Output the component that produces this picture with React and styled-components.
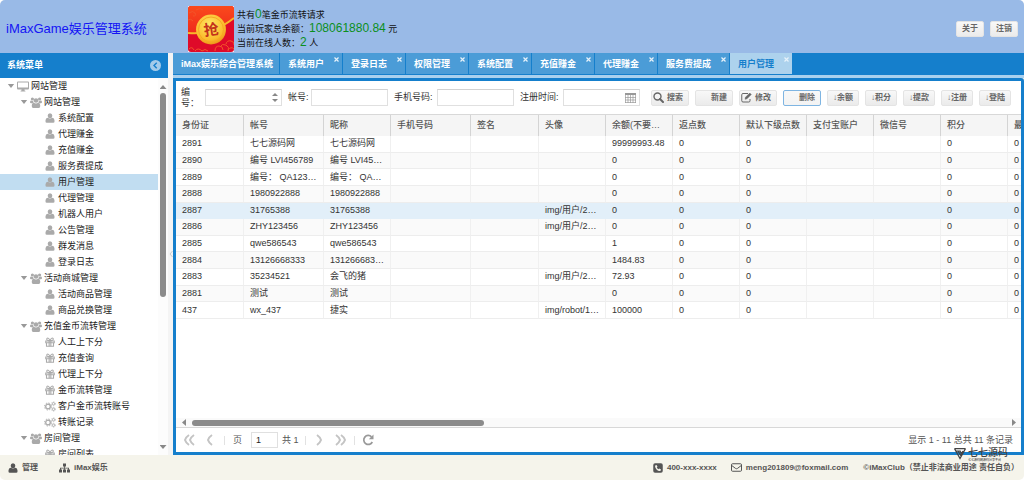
import React from "react";
import styled, { createGlobalStyle, css } from "styled-components";

const GlobalStyle = createGlobalStyle`
  *, *::before, *::after { box-sizing: border-box; }
  html, body, #root { height: 100%; }
  body {
    margin: 0;
    background: #fff;
    color: #333;
    font: 9px/13px "Liberation Sans", "Noto Sans CJK SC", sans-serif;
  }
  ul { margin: 0; padding: 0; list-style: none; }
  button, input { font: inherit; color: inherit; }
`;

/* ---------- icons ---------- */

const Svg = styled.svg`
  display: block;
  flex: none;
  width: ${(p) => p.$w || 10}px;
  height: ${(p) => p.$h || p.$w || 10}px;
`;

const UserIcon = () => (
  <Svg viewBox="0 0 20 20" fill="currentColor" aria-hidden="true">
    <ellipse cx="10" cy="5.500" rx="4.600" ry="5" />
    <path d="M1 17v-2q0-5 4.600-5.500 4.400 3 8.800 0Q19 10 19 15v2q0 2.500-2.500 2.500h-13Q1 19.500 1 17z" />
  </Svg>
);

const UsersIcon = () => (
  <Svg $w={12} $h={11} viewBox="0 0 24 22" fill="currentColor" aria-hidden="true">
    <circle cx="4.800" cy="4" r="3.200" />
    <circle cx="19.200" cy="4" r="3.200" />
    <circle cx="12" cy="7" r="4.600" />
    <path d="M2 7q2.500 1.500 4.600.5-.3 3 1 5H2.500Q0 12.500 0 10.500 0 7.500 2 7zM22 7q-2.500 1.500-4.600.5.3 3-1 5h5.100q2.500 0 2.500-2 0-3-2-3.500z" />
    <path d="M7.600 11.500q4.400 2.800 8.800 0 4.100.5 4.100 6.500 0 3.800-3 3.800h-11q-3 0-3-3.800 0-6 4.100-6.500z" />
  </Svg>
);

const DesktopIcon = () => (
  <Svg $w={12} $h={11} viewBox="0 0 24 22" fill="currentColor" aria-hidden="true">
    <path fillRule="evenodd" d="M2 1h20q2 0 2 2v12q0 2-2 2h-7v2q2 0 2 2H7q0-2 2-2v-2H2q-2 0-2-2V3q0-2 2-2zm0 2v10h20V3z" />
  </Svg>
);

const GiftIcon = () => (
  <Svg viewBox="0 0 20 20" fill="none" stroke="currentColor" strokeWidth="2.200" aria-hidden="true">
    <path d="M1.500 8h17v3.500h-17zM3 11.500v7h14v-7" />
    <path d="M8.300 8v10.500M11.700 8v10.500" />
    <path d="M10 7Q7.500 2 5.500 2T3.500 4.500 6 7h8q2.500 0 2.500-2.500T14.500 2 10 7z" />
  </Svg>
);

const CogsIcon = () => (
  <Svg $w={12} $h={11} viewBox="0 0 24 22" fill="none" stroke="currentColor" aria-hidden="true">
    <circle cx="8" cy="11" r="4.600" strokeWidth="2.600" />
    <circle cx="8" cy="11" r="7" strokeWidth="2" strokeDasharray="2.750 2.750" />
    <circle cx="19" cy="5.500" r="2.400" strokeWidth="1.800" />
    <circle cx="19" cy="5.500" r="4" strokeWidth="1.200" strokeDasharray="2 2.190" />
    <circle cx="19" cy="16.500" r="2.400" strokeWidth="1.800" />
    <circle cx="19" cy="16.500" r="4" strokeWidth="1.200" strokeDasharray="2 2.190" />
  </Svg>
);

const SearchIcon = () => (
  <Svg $w={11} viewBox="0 0 22 22" fill="none" stroke="currentColor" aria-hidden="true">
    <circle cx="9" cy="9" r="7" strokeWidth="2.800" />
    <path d="M14 14l6 6" strokeWidth="4" strokeLinecap="round" />
  </Svg>
);

const EditIcon = () => (
  <Svg $w={11} viewBox="0 0 22 22" fill="none" stroke="currentColor" aria-hidden="true">
    <path d="M14 3H4Q1.500 3 1.500 5.500v12Q1.500 20 4 20h11.500q2.500 0 2.500-2.500V14" strokeWidth="2" />
    <path d="M8 14.500l1-4L17.500 2l3 3L12 13.500z" fill="currentColor" strokeWidth="1" />
  </Svg>
);

const SitemapIcon = () => (
  <Svg $w={11} $h={10} viewBox="0 0 22 20" fill="currentColor" aria-hidden="true">
    <path d="M8 1h6v6h-2.200v2.500H20V13h2v6h-6v-6h2.200v-1.800h-6.400V13H14v6H8v-6h2.200v-1.800H3.800V13H6v6H0v-6h2V9.500h8.200V7H8z" />
  </Svg>
);

const PhoneIcon = () => (
  <Svg viewBox="0 0 20 20" aria-hidden="true">
    <rect x="0.500" y="0.500" width="19" height="19" rx="3.500" fill="currentColor" />
    <path d="M4 6Q5 4 7 4l2 3.500-1.500 1.500q1 2.500 3.500 3.500l1.500-1.500L16 13q0 2-2 3-3 .8-6.500-2.700T4 6z" fill="#f5f4eb" />
  </Svg>
);

const MailIcon = () => (
  <Svg $w={11} $h={9} viewBox="0 0 22 18" fill="none" stroke="currentColor" strokeWidth="2" aria-hidden="true">
    <rect x="1" y="1.500" width="20" height="15" rx="2" />
    <path d="M1.500 5l7.500 5.800q2 1.400 4 0L20.500 5" />
  </Svg>
);

const CalendarIcon = () => (
  <Svg $w={11} $h={10} viewBox="0 0 11 10" fill="none" stroke="#999" aria-hidden="true">
    <path d="M0 1h11" strokeWidth="2" />
    <path d="M.5 1v9M3 1v9M5.500 1v9M8 1v9M10.500 1v9M0 4.500h11M0 7h11M0 9.500h11" strokeWidth="0.700" />
  </Svg>
);

const Chevrons = ({ double, flip }) => (
  <Svg $w={double ? 12 : 8} $h={12} viewBox={double ? "0 0 12 12" : "0 0 8 12"} fill="none" stroke="currentColor" strokeWidth="2" aria-hidden="true">
    <g transform={flip ? `translate(${double ? 12 : 8} 0) scale(-1 1)` : undefined}>
      <path d="M6 1Q3 3 2 6q1 3 4 5" />
      {double && <path d="M11 1Q8 3 7 6q1 3 4 5" />}
    </g>
  </Svg>
);

const RefreshIcon = () => (
  <Svg $w={12} viewBox="0 0 12 12" aria-hidden="true">
    <path d="M9.500 2.800A4.500 4.500 0 1 0 10.300 8" fill="none" stroke="#999" strokeWidth="1.700" />
    <path d="M11.500.5v4.700H6.800z" fill="#999" />
  </Svg>
);

const RedPacket = () => (
  <Svg $w={46} viewBox="0 0 46 46" role="img" aria-label="抢红包">
    <defs>
      <linearGradient id="flap" x1="0" y1="0" x2="0" y2="1">
        <stop offset="0" stopColor="#fb4a1c" />
        <stop offset="1" stopColor="#ee2a1c" />
      </linearGradient>
      <radialGradient id="coin" cx=".45" cy=".35" r=".7">
        <stop offset="0" stopColor="#ffe765" />
        <stop offset=".7" stopColor="#fbbc2c" />
        <stop offset="1" stopColor="#e88a15" />
      </radialGradient>
    </defs>
    <rect width="46" height="46" fill="#fff" />
    <rect width="46" height="46" rx="3" fill="#df0a29" />
    <path d="M0 3Q0 0 3 0h40q3 0 3 3v9Q34 20 23 25 12 28 0 27z" fill="url(#flap)" />
    <path d="M0 27q13 1 23-2 13-5 23-13" fill="none" stroke="#f9b62b" strokeWidth="2" />
    <g fill="none" stroke="#f2542a" strokeWidth="1">
      <path d="M1 7q4-3 6 0t-2 3M8 4q4-3 7 0M0 14q3-2 5 1" />
      <path d="M27 45q0-5 4-5t4 4M32 41q2-4 6-2t2 6M38 38q1-4 5-3t3 4M40 44q3-4 6-1M7 45q3-4 7 0M14 45q3-3 6 0M1 43q3-3 5 1" />
    </g>
    <circle cx="23" cy="23.500" r="15" fill="url(#coin)" />
    <circle cx="23" cy="23.500" r="12.500" fill="none" stroke="#f5a823" strokeWidth="1" />
    <text x="23" y="29" textAnchor="middle" transform="rotate(-8 23 23)" fontSize="15" fontWeight="700" fontFamily="'Noto Sans CJK SC', sans-serif" fill="#c4331b">抢</text>
  </Svg>
);

/* ---------- page frame ---------- */

const Page = styled.div`
  display: flex;
  flex-direction: column;
  height: 100vh;
  overflow: hidden;
  border-radius: 5px;
  background: #f5f4eb;
`;

const Header = styled.header`
  display: flex;
  flex: none;
  align-items: center;
  height: 53px;
  padding: 5px 6px 0;
  background: #99bae7;
`;

const Title = styled.h1`
  width: 182px;
  margin: 0;
  color: #1414f5;
  font-size: 13px;
  font-weight: 400;
  line-height: 20px;
`;

const Stats = styled.div`
  display: flex;
  flex: 1;
  align-items: center;
  gap: 3px;
  height: 46px;
  color: #111;
`;

const StatLines = styled.div`
  white-space: nowrap;
  p { margin: 0; line-height: 13px; }
  strong { color: #0b8f1d; font-size: 12px; font-weight: 400; }
`;

const Row = styled.div`
  display: flex;
  gap: ${(p) => p.$gap || 0}px;
`;

const Button = styled.button`
  display: flex;
  flex: none;
  align-items: center;
  justify-content: ${(p) => (p.$iconSpace ? "flex-end" : "center")};
  gap: 3px;
  width: ${(p) => p.$w}px;
  height: 16px;
  padding: 0 ${(p) => (p.$iconSpace ? 5 : 0)}px 0 0;
  border: 1px solid ${(p) => (p.$focus ? "#7fb5e2" : "#e4e4e4")};
  border-radius: 2px;
  background: linear-gradient(#f8f8f8, ${(p) => (p.$focus ? "#f3f3f3" : "#ebebeb")});
  color: #666;
  font-size: 8px;
  font-weight: 700;
  line-height: 14px;
  white-space: nowrap;
`;

const Body = styled.div`
  display: flex;
  flex: 1;
  min-height: 0;
`;

/* ---------- sidebar ---------- */

const Sidebar = styled.aside`
  display: flex;
  flex: none;
  flex-direction: column;
  width: 168px;
  background: #fff;
`;

const SideHead = styled.div`
  display: flex;
  flex: none;
  align-items: center;
  justify-content: space-between;
  height: 25px;
  padding: 0 7px;
  background: #157fcc;
  color: #fff;
  font-weight: 700;
`;

const Collapse = styled.button`
  padding: 0;
  border: 0;
  background: none;
`;

const TreeBox = styled.div`
  display: flex;
  flex: 1;
  min-height: 0;
  overflow: hidden;
`;

const Tree = styled.ul`
  flex: 1;
  min-width: 0;
`;

const Node = styled.li`
  display: flex;
  align-items: center;
  gap: 2px;
  height: 16px;
  padding-left: ${(p) => [7, 20, 44][p.$level]}px;
  background: ${(p) => (p.$selected ? "#c1ddf1" : "transparent")};
  color: #222;
  white-space: nowrap;
  svg { color: #aaa; }
`;

const Arrow = styled.span`
  width: 8px;
  height: 4px;
  background: #999;
  clip-path: polygon(10% 0, 90% 0, 50% 100%);
`;

const IconSlot = styled.span`
  display: flex;
  flex: none;
  justify-content: center;
  width: 12px;
`;

const VScroll = styled.div`
  display: flex;
  flex: none;
  flex-direction: column;
  align-items: center;
  width: 10px;
  padding: 7px 0 6px;
  background: #fcfcfc;
`;

const Triangle = styled.span`
  flex: none;
  background: #888;
  ${(p) =>
    ({
      up: css`width: 7px; height: 4px; clip-path: polygon(50% 0, 100% 100%, 0 100%);`,
      down: css`width: 7px; height: 4px; clip-path: polygon(0 0, 100% 0, 50% 100%);`,
      left: css`width: 4px; height: 7px; clip-path: polygon(100% 0, 100% 100%, 0 50%);`,
      right: css`width: 4px; height: 7px; clip-path: polygon(0 0, 100% 50%, 0 100%);`,
    })[p.$dir]}
`;

const VThumb = styled.span`
  width: 6px;
  height: 56%;
  margin: 4px 0 auto;
  border-radius: 3px;
  background: #8b8b8b;
`;

const Splitter = styled.div`
  display: flex;
  flex: none;
  align-items: center;
  justify-content: center;
  width: 5px;
  background: #f4f4f4;
  color: #ccc;
`;

/* ---------- main ---------- */

const Main = styled.main`
  display: flex;
  flex: 1;
  flex-direction: column;
  min-width: 0;
`;

const Tabs = styled.nav`
  display: flex;
  flex: none;
  gap: 1px;
  height: 25px;
  border-bottom: 3px solid #a9d0ee;
  background: #157fcc;
`;

const Tab = styled.div`
  display: flex;
  position: relative;
  height: 21px;
  background: ${(p) => (p.$active ? "#add2ed" : "#4b9cd7")};
`;

const TabLabel = styled.button`
  width: ${(p) => p.$w}px;
  padding: 2px ${(p) => (p.$closable ? 19 : 8)}px 0 8px;
  border: 0;
  background: none;
  color: ${(p) => (p.$active ? "#157fcc" : "#fff")};
  font-weight: 700;
  text-align: left;
  white-space: nowrap;
`;

const Close = styled.button`
  position: absolute;
  top: 4px;
  right: 3px;
  padding: 0;
  border: 0;
  background: none;
  color: #e6f2fb;
`;

const Panel = styled.section`
  display: flex;
  flex: 1;
  flex-direction: column;
  min-height: 0;
  border: 3px solid #157fcc;
  border-radius: 0 3px 0 0;
  background: #fff;
`;

const Toolbar = styled.form`
  display: flex;
  flex: none;
  align-items: center;
  gap: 6px;
  height: 33px;
  padding: 0 11px 0 5px;
`;

const Field = styled.div`
  display: flex;
  align-items: center;
  margin-right: ${(p) => (p.$last ? 5 : 0)}px;
`;

const Label = styled.label`
  width: ${(p) => p.$w}px;
  padding-right: ${(p) => p.$pad || 0}px;
  line-height: 11px;
`;

const InputBox = styled.span`
  display: flex;
  align-items: center;
  width: 77px;
  height: 17px;
  padding-right: 3px;
  border: 1px solid #e0e0e0;
  border-top-color: #d2d2d2;
  background: #fff;
`;

const Input = styled.input`
  flex: 1;
  min-width: 0;
  height: 100%;
  padding: 0 4px;
  border: 0;
  outline: 0;
  background: transparent;
`;

const Spin = styled.span`
  display: flex;
  flex-direction: column;
  gap: 3px;
  span { width: 6px; height: 3px; }
`;

const Grid = styled.div`
  flex: 1;
  min-height: 0;
  overflow: hidden;
  border-top: 1px solid #d8d8d8;
`;

const Table = styled.table`
  width: 874px;
  height: 204px;
  border-collapse: separate;
  border-spacing: 0;
  table-layout: fixed;
`;

const Th = styled.th`
  height: 21px;
  padding: 0 5px 0 6px;
  overflow: hidden;
  border-right: 1px solid #d4d4d4;
  background: #f5f5f5;
  color: #555;
  font-weight: 500;
  text-align: left;
  text-overflow: ellipsis;
  white-space: nowrap;
`;

const Td = styled.td`
  padding: 0 5px 0 6px;
  overflow: hidden;
  border-right: 1px solid #f0f0f0;
  border-bottom: 1px solid #ededed;
  line-height: 13px;
  text-overflow: ellipsis;
  white-space: nowrap;
`;

const Tr = styled.tr`
  background: ${(p) => (p.$selected ? "#e2eff9" : p.$odd ? "#fafafa" : "#fff")};
  ${(p) => p.$selected && css`td { border-color: #e2eff9; }`}
`;

const HScroll = styled.div`
  display: flex;
  flex: none;
  align-items: center;
  height: 9px;
  padding: 0 5px 0 6px;
  background: #fafafa;
`;

const HThumb = styled.span`
  width: 35%;
  height: 6px;
  margin: 0 auto 0 6px;
  border-radius: 3px;
  background: #8b8b8b;
`;

const Pager = styled.div`
  display: flex;
  flex: none;
  align-items: center;
  height: 25px;
  padding: 0 8px 0 7px;
  border-top: 1px solid #d8d8d8;
  color: #555;
`;

const PagerButton = styled.button`
  display: flex;
  padding: 0;
  margin-right: ${(p) => p.$after || 0}px;
  border: 0;
  background: none;
  color: #c4c4c4;
`;

const Divider = styled.span`
  width: 1px;
  height: 9px;
  margin-right: ${(p) => p.$after}px;
  background: #e2e2e2;
`;

const PageInput = styled.input`
  width: 27px;
  height: 16px;
  margin: 0 4px 0 9px;
  padding: 0 4px;
  border: 1px solid #e0e0e0;
  color: #222;
`;

const Total = styled.span`
  width: ${(p) => p.$w}px;
`;

const Summary = styled.span`
  margin-left: auto;
`;

/* ---------- footer ---------- */

const Footer = styled.footer`
  display: flex;
  position: relative;
  flex: none;
  align-items: center;
  height: 25px;
  padding: 0 5px 0 8px;
  color: #555;
  font-size: 8px;
  font-weight: 700;
  white-space: nowrap;
`;

const FootItem = styled.span`
  display: flex;
  align-items: center;
  gap: 4px;
  margin-left: ${(p) => p.$before || 0}px;
  ${(p) => p.$push && css`margin-left: auto;`}
`;

const FootLink = styled.a`
  color: inherit;
  text-decoration: none;
`;

const Watermark = styled.div`
  display: flex;
  position: absolute;
  top: -8px;
  right: 16px;
  gap: 2px;
  color: #444;
`;

const MarkText = styled.div`
  font-size: 10px;
  font-weight: 500;
  line-height: 11px;
  small { display: block; font-size: 3px; line-height: 4px; }
`;

/* ---------- data ---------- */

const tree = [
  [0, "网站管理", DesktopIcon],
  [1, "网站管理", UsersIcon],
  [2, "系统配置", UserIcon],
  [2, "代理赚金", UserIcon],
  [2, "充值赚金", UserIcon],
  [2, "服务费提成", UserIcon],
  [2, "用户管理", UserIcon],
  [2, "代理管理", UserIcon],
  [2, "机器人用户", UserIcon],
  [2, "公告管理", UserIcon],
  [2, "群发消息", UserIcon],
  [2, "登录日志", UserIcon],
  [1, "活动商城管理", UsersIcon],
  [2, "活动商品管理", UserIcon],
  [2, "商品兑换管理", UserIcon],
  [1, "充值金币流转管理", UsersIcon],
  [2, "人工上下分", GiftIcon],
  [2, "充值查询", GiftIcon],
  [2, "代理上下分", GiftIcon],
  [2, "金币流转管理", GiftIcon],
  [2, "客户金币流转账号", CogsIcon],
  [2, "转账记录", CogsIcon],
  [1, "房间管理", UsersIcon],
  [2, "房间列表", GiftIcon],
];

const tabs = ["系统用户", "登录日志", "权限管理", "系统配置", "充值赚金", "代理赚金", "服务费提成", "用户管理"];

const columns = [
  ["身份证", 68], ["帐号", 80], ["昵称", 67], ["手机号码", 80], ["签名", 68], ["头像", 67],
  ["余额(不要修改)", 67], ["返点数", 67], ["默认下级点数", 67], ["支付宝账户", 67],
  ["微信号", 67], ["积分", 67], ["最后登录", 42],
];

const users = [
  ["2891", "七七源码网", "七七源码网", "", "99999993.48"],
  ["2890", "编号 LVI456789", "编号 LVI456789", "", "0"],
  ["2889", "编号： QA123456", "编号： QA123456", "", "0"],
  ["2888", "1980922888", "1980922888", "", "0"],
  ["2887", "31765388", "31765388", "img/用户/2887", "0"],
  ["2886", "ZHY123456", "ZHY123456", "img/用户/2886", "0"],
  ["2885", "qwe586543", "qwe586543", "", "1"],
  ["2884", "13126668333", "13126668333", "", "1484.83"],
  ["2883", "35234521", "会飞的猪", "img/用户/2883", "72.93"],
  ["2881", "测试", "测试", "", "0"],
  ["437", "wx_437", "捷实", "img/robot/100", "100000"],
];

const toCells = ([id, account, nick, avatar, balance]) => [
  id, account, nick, "", "", avatar, balance, "0", "0", "", "", "0", "0",
];

export default function App() {
  return (
    <Page>
      <GlobalStyle />
      <Header>
        <Title>iMaxGame娱乐管理系统</Title>
        <Stats>
          <RedPacket />
          <StatLines>
            <p>共有<strong>0</strong>笔金币流转请求</p>
            <p>当前玩家总余额：<strong>108061880.84</strong> 元</p>
            <p>当前在线人数：<strong>2</strong> 人</p>
          </StatLines>
        </Stats>
        <Row $gap={6}>
          <Button type="button" $w={28}>关于</Button>
          <Button type="button" $w={28}>注销</Button>
        </Row>
      </Header>

      <Body>
        <Sidebar>
          <SideHead>
            系统菜单
            <Collapse type="button" aria-label="收起">
              <Svg $w={11} viewBox="0 0 22 22" aria-hidden="true">
                <circle cx="11" cy="11" r="11" fill="#a3cbea" />
                <path d="M13.500 5.500L8 11l5.500 5.500" fill="none" stroke="#157fcc" strokeWidth="2.800" />
              </Svg>
            </Collapse>
          </SideHead>
          <TreeBox>
            <Tree>
              {tree.map(([level, text, Icon], i) => (
                <Node key={i} $level={level} $selected={i === 6}>
                  {level < 2 && <Arrow />}
                  <IconSlot><Icon /></IconSlot>
                  {text}
                </Node>
              ))}
            </Tree>
            <VScroll>
              <Triangle $dir="up" />
              <VThumb />
              <Triangle $dir="down" />
            </VScroll>
          </TreeBox>
        </Sidebar>
        <Splitter>
          <Svg $w={4} $h={8} viewBox="0 0 4 8" aria-hidden="true">
            <path d="M3.500 1L1 4l2.500 3" fill="none" stroke="currentColor" />
          </Svg>
        </Splitter>

        <Main>
          <Tabs>
            <Tab><TabLabel type="button" $w={106}>iMax娱乐综合管理系统</TabLabel></Tab>
            {tabs.map((t, i) => {
              const active = i === tabs.length - 1;
              return (
                <Tab key={t} $active={active}>
                  <TabLabel type="button" $w={t.length > 4 ? 71 : 62} $closable $active={active}>{t}</TabLabel>
                  <Close type="button" aria-label={`关闭${t}`}>
                    <Svg $w={5} viewBox="0 0 5 5" aria-hidden="true">
                      <path d="M.5.5l4 4M4.500.5l-4 4" stroke="currentColor" strokeWidth="1.200" />
                    </Svg>
                  </Close>
                </Tab>
              );
            })}
          </Tabs>
          <Panel>
            <Toolbar onSubmit={(e) => e.preventDefault()}>
              <Field>
                <Label htmlFor="f-id" $w={24} $pad={8}>编号：</Label>
                <InputBox>
                  <Input id="f-id" />
                  <Spin><Triangle $dir="up" /><Triangle $dir="down" /></Spin>
                </InputBox>
              </Field>
              <Field>
                <Label htmlFor="f-account" $w={23}>帐号:</Label>
                <InputBox><Input id="f-account" /></InputBox>
              </Field>
              <Field>
                <Label htmlFor="f-phone" $w={43}>手机号码:</Label>
                <InputBox><Input id="f-phone" /></InputBox>
              </Field>
              <Field $last>
                <Label htmlFor="f-date" $w={43}>注册时间:</Label>
                <InputBox><Input id="f-date" /><CalendarIcon /></InputBox>
              </Field>
              <Button type="submit" $w={38} $iconSpace><SearchIcon />搜索</Button>
              <Button type="button" $w={38} $iconSpace>新建</Button>
              <Button type="button" $w={38} $iconSpace><EditIcon />修改</Button>
              <Button type="button" $w={38} $iconSpace $focus>删除</Button>
              {["余额", "积分", "提款", "注册", "登陆"].map((t) => (
                <Button key={t} type="button" $w={32}>↓{t}</Button>
              ))}
            </Toolbar>
            <Grid>
              <Table>
                <colgroup>
                  {columns.map(([name, w]) => <col key={name} width={w} />)}
                </colgroup>
                <thead>
                  <tr>{columns.map(([name]) => <Th key={name} scope="col">{name}</Th>)}</tr>
                </thead>
                <tbody>
                  {users.map((u, r) => (
                    <Tr key={u[0]} $odd={r % 2 === 1} $selected={r === 4}>
                      {toCells(u).map((c, i) => <Td key={i}>{c}</Td>)}
                    </Tr>
                  ))}
                </tbody>
              </Table>
            </Grid>
            <HScroll>
              <Triangle $dir="left" />
              <HThumb />
              <Triangle $dir="right" />
            </HScroll>
            <Pager>
              <PagerButton type="button" aria-label="首页" $after={11}><Chevrons double /></PagerButton>
              <PagerButton type="button" aria-label="上一页" $after={10}><Chevrons /></PagerButton>
              <Divider $after={8} />
              <label htmlFor="page">页</label>
              <PageInput id="page" defaultValue="1" />
              <Total $w={23}>共 1</Total>
              <Divider $after={9} />
              <PagerButton type="button" aria-label="下一页" $after={12}><Chevrons flip /></PagerButton>
              <PagerButton type="button" aria-label="末页" $after={7}><Chevrons double flip /></PagerButton>
              <Divider $after={7} />
              <PagerButton type="button" aria-label="刷新"><RefreshIcon /></PagerButton>
              <Summary>显示 1 - 11 总共 11 条记录</Summary>
            </Pager>
          </Panel>
        </Main>
      </Body>

      <Footer>
        <FootItem><UserIcon />管理</FootItem>
        <FootItem $before={21}><SitemapIcon />iMax娱乐</FootItem>
        <FootItem $push><PhoneIcon />400-xxx-xxxx</FootItem>
        <FootItem $before={14}>
          <MailIcon />
          <FootLink href="mailto:meng201809@foxmail.com">meng201809@foxmail.com</FootLink>
        </FootItem>
        <FootItem $before={15}>©iMaxClub（禁止非法商业用途 责任自负）</FootItem>
        <Watermark>
          <Svg $w={12} $h={13} viewBox="0 0 24 26" fill="none" stroke="currentColor" strokeWidth="2.500" aria-hidden="true">
            <path d="M1 3h22M4 8h9M1 3l11 20L23 3M8 8l5 8 5-8M12 8l3 5" />
          </Svg>
          <MarkText>
            七七源码
            <small>七七源码网源码分享平台</small>
          </MarkText>
        </Watermark>
      </Footer>
    </Page>
  );
}
